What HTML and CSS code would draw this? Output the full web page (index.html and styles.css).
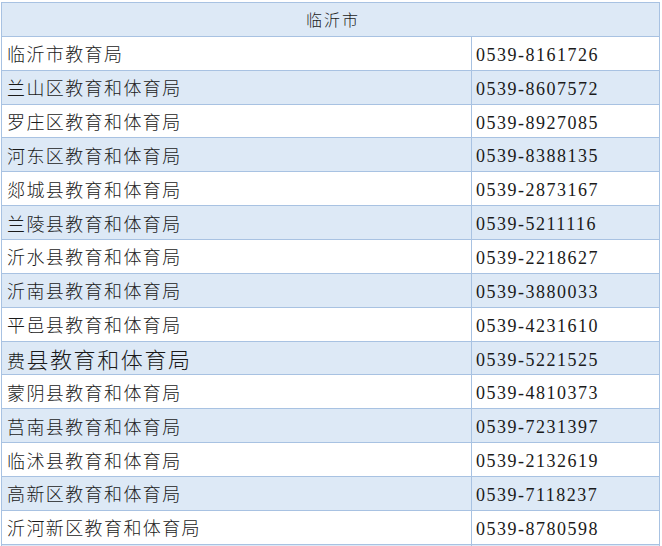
FILE: index.html
```html
<!DOCTYPE html>
<html lang="zh">
<head>
<meta charset="utf-8">
<link rel="stylesheet" href="styles.css">
</head>
<body>
<table class="contacts">
  <colgroup><col class="col-name"><col class="col-phone"></colgroup>
  <tr class="blue"><th colspan="2" class="title">临沂市</th></tr>
  <tr><td class="name">临沂市教育局</td><td class="phone">0539-8161726</td></tr>
  <tr class="blue"><td class="name">兰山区教育和体育局</td><td class="phone">0539-8607572</td></tr>
  <tr><td class="name">罗庄区教育和体育局</td><td class="phone">0539-8927085</td></tr>
  <tr class="blue"><td class="name">河东区教育和体育局</td><td class="phone">0539-8388135</td></tr>
  <tr><td class="name">郯城县教育和体育局</td><td class="phone">0539-2873167</td></tr>
  <tr class="blue"><td class="name">兰陵县教育和体育局</td><td class="phone">0539-5211116</td></tr>
  <tr><td class="name">沂水县教育和体育局</td><td class="phone">0539-2218627</td></tr>
  <tr class="blue"><td class="name">沂南县教育和体育局</td><td class="phone">0539-3880033</td></tr>
  <tr><td class="name">平邑县教育和体育局</td><td class="phone">0539-4231610</td></tr>
  <tr class="blue"><td class="name">费<span class="big">县教育和体育局</span></td><td class="phone">0539-5221525</td></tr>
  <tr><td class="name">蒙阴县教育和体育局</td><td class="phone">0539-4810373</td></tr>
  <tr class="blue"><td class="name">莒南县教育和体育局</td><td class="phone">0539-7231397</td></tr>
  <tr><td class="name">临沭县教育和体育局</td><td class="phone">0539-2132619</td></tr>
  <tr class="blue"><td class="name">高新区教育和体育局</td><td class="phone">0539-7118237</td></tr>
  <tr><td class="name">沂河新区教育和体育局</td><td class="phone">0539-8780598</td></tr>
  <tr class="blue stub"><td></td><td></td></tr>
</table>
</body>
</html>
```

FILE: styles.css
```css
html {
  overflow: hidden;
}
body {
  margin: 0;
  padding: 2px 0 0 1px;
  background: #ffffff;
}
.contacts {
  border-collapse: collapse;
  width: 658px;
  table-layout: fixed;
  color: #1a1a1a;
}
.col-name { width: 470px; }
.col-phone { width: 188px; }
.contacts tr { height: 33.87px; }
.contacts th,
.contacts td {
  border: 1px solid #a8c2e2;
  padding: 0 0 0 5px;
  vertical-align: middle;
  white-space: nowrap;
  overflow: hidden;
}
.contacts tr.blue { background: #dde9f6; }
.contacts tr.stub { height: 2px; }
.contacts tr.stub td { padding: 0; border-bottom: none; }
.title {
  font-family: "Noto Sans CJK SC", sans-serif;
  font-weight: 300;
  font-size: 16px;
  letter-spacing: 2px;
  text-align: center;
  padding: 2px 0 0 0;
}
.name {
  font-family: "Noto Sans CJK SC", sans-serif;
  font-weight: 300;
  font-size: 18px;
  letter-spacing: 1.4px;
  padding-top: 2px;
}
.name .big {
  font-size: 22px;
  letter-spacing: 1.6px;
}
.contacts td.phone {
  font-family: "Liberation Serif", "Noto Sans CJK SC", serif;
  font-size: 18px;
  line-height: 20px;
  letter-spacing: 1.5px;
  vertical-align: top;
  padding: 8px 0 0 4px;
}
```
